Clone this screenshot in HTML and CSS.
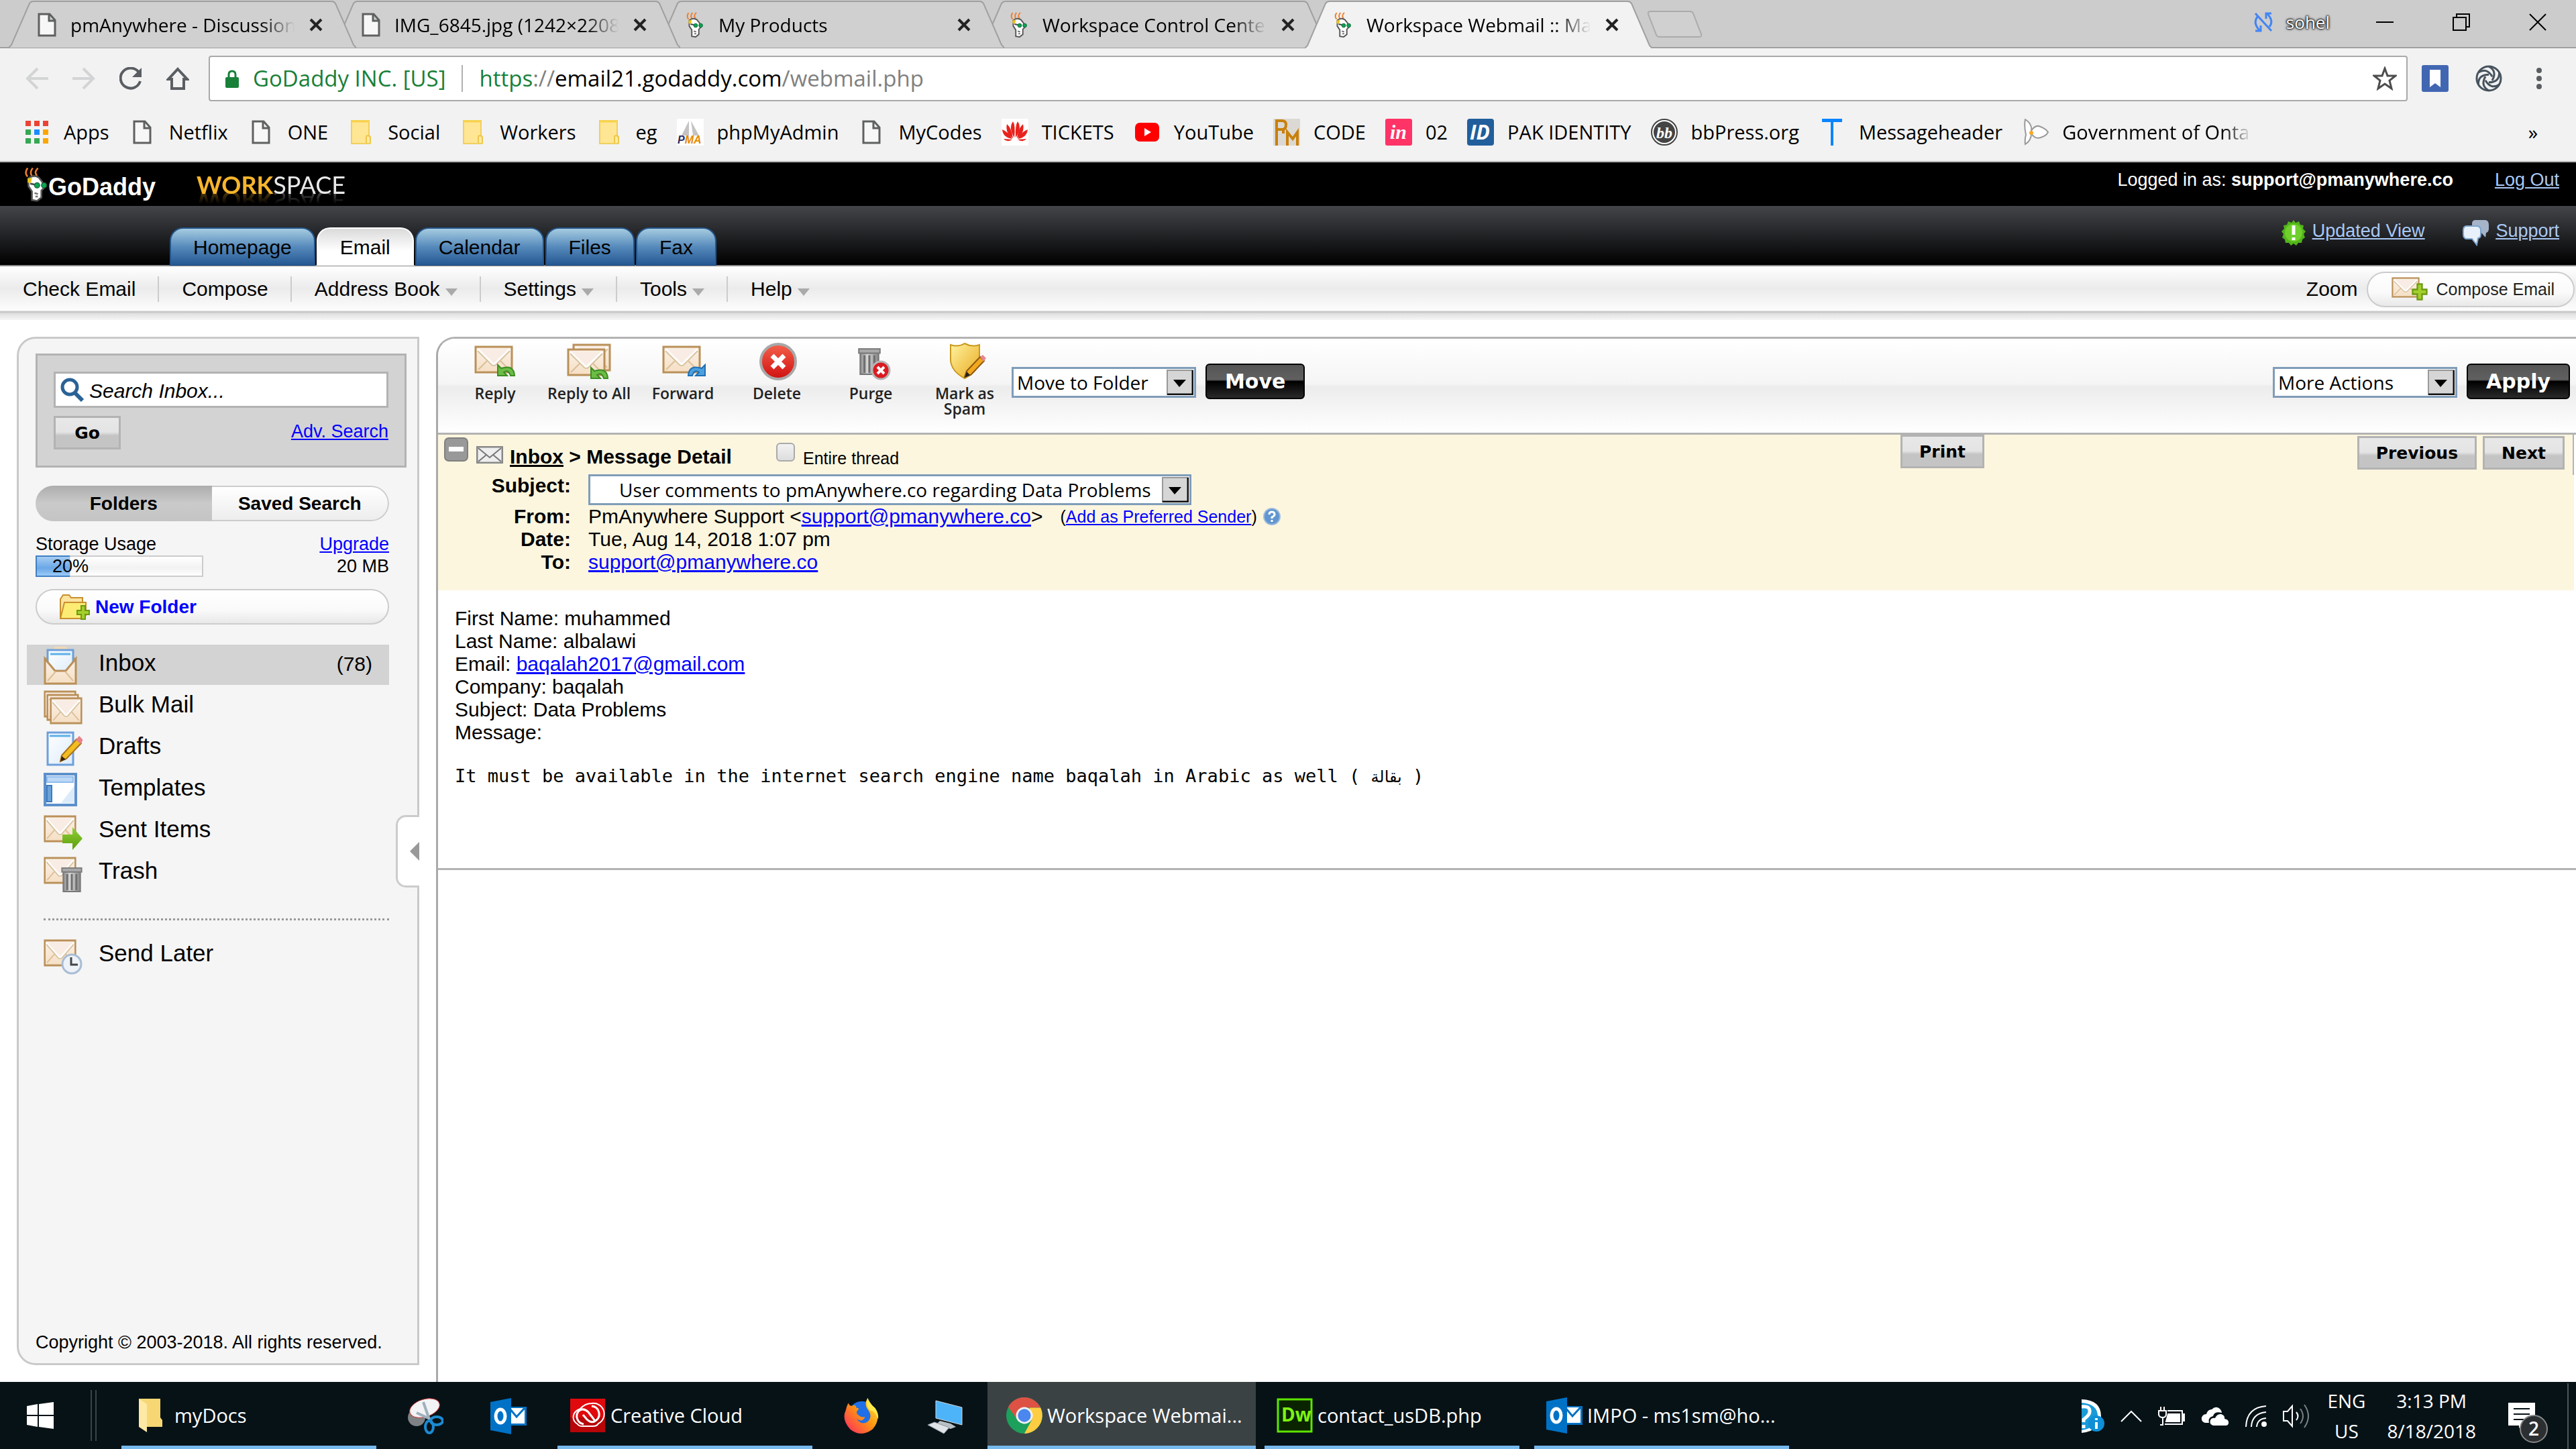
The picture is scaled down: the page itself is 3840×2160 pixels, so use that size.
FILE: index.html
```html
<!DOCTYPE html>
<html lang="en">

<head>
    <meta charset="UTF-8">
    <meta name="viewport" content="width=device-width, initial-scale=1.0">
    <title>Workspace Webmail :: Mail</title>
    <link rel="stylesheet" href="styles.css">
</head>

<body>
    <!-- shared icons -->
    <svg class="defs" width="0" height="0" aria-hidden="true">
        <defs>
            <linearGradient id="gEnv" x1="0" y1="0" x2="0" y2="1">
                <stop offset="0" stop-color="#fbf1e8"/>
                <stop offset="1" stop-color="#f5dfc4"/>
            </linearGradient>
            <linearGradient id="gSheet" x1="0" y1="0" x2="1" y2="1">
                <stop offset="0" stop-color="#ffffff"/>
                <stop offset="1" stop-color="#dcebfa"/>
            </linearGradient>
            <linearGradient id="gBin" x1="0" y1="0" x2="1" y2="0">
                <stop offset="0" stop-color="#8c8c8c"/>
                <stop offset="0.4" stop-color="#d8d8d8"/>
                <stop offset="1" stop-color="#858585"/>
            </linearGradient>
            <linearGradient id="gGold" x1="0" y1="0" x2="1" y2="1">
                <stop offset="0" stop-color="#fff3a0"/>
                <stop offset="1" stop-color="#e9a91f"/>
            </linearGradient>
            <linearGradient id="gRed" x1="0" y1="0" x2="0" y2="1">
                <stop offset="0" stop-color="#f4604a"/>
                <stop offset="1" stop-color="#d01010"/>
            </linearGradient>
            <linearGradient id="gFire" x1="1" y1="0" x2="0" y2="1">
                <stop offset="0" stop-color="#fff44f"/>
                <stop offset="0.45" stop-color="#ff980e"/>
                <stop offset="1" stop-color="#ff1f6b"/>
            </linearGradient>
            <linearGradient id="gArrow" x1="0" y1="0" x2="0" y2="1">
                <stop offset="0" stop-color="#8ed136"/>
                <stop offset="1" stop-color="#5d9c0c"/>
            </linearGradient>
        </defs>
        <symbol id="tab-shape" viewBox="0 0 518 71" preserveAspectRatio="none">
            <path d="M0 71 L4 67 L31 5 Q33 2 37 2 H481 Q485 2 487 5 L514 67 L518 71" stroke-width="2"/>
        </symbol>
        <symbol id="page" viewBox="0 0 28 36">
            <path d="M2 2 H18 L26 11 V34 H2 Z M17 2 V12 H26" fill="#f7f7f7" stroke="#5f6060" stroke-width="3"/>
        </symbol>
        <symbol id="folder" viewBox="0 0 30 36">
            <path d="M1 1 H27 V23 L29 25 V35 H1 Z" fill="#ffe694" stroke="#f0cf5e" stroke-width="2"/>
            <path d="M1 2 H27" stroke="#f9d34c" stroke-width="3"/>
            <path d="M23 34 V25 Q23 23 26 23 Q29 24 29 27 V34" fill="#ffeaa3" stroke="#eec74a" stroke-width="2"/>
        </symbol>
        <symbol id="daddy" viewBox="0 0 28 40">
            <path d="M4 11 Q0 7 4 1 M9 10 Q6 6 10 1 M15 10 Q11 6 16 1" fill="none" stroke="#ee7c2b" stroke-width="2"/>
            <path d="M5 13 Q11 8 17 12 L21 17 L23 24 L20 27 L20 35 L15 39 L9 38 L9 28 L5 22 Z" fill="#fff" stroke="#555" stroke-width="2"/>
            <path d="M4 13 L9 12 L8 18 L4 18 Z" fill="#e8c21d"/>
            <path d="M12 30 L16 31 M13 34 L16 34" stroke="#777" stroke-width="2"/>
            <path d="M7 19 L12 20" stroke="#444" stroke-width="2"/>
            <circle cx="15" cy="21" r="3" fill="#0aa653" stroke="#17613a"/>
            <circle cx="23" cy="21" r="3" fill="#0aa653" stroke="#17613a"/>
        </symbol>
        <symbol id="x" viewBox="0 0 20 20">
            <path d="M2 2 L18 18 M18 2 L2 18" stroke="#222" stroke-width="4"/>
        </symbol>
        <symbol id="env" viewBox="0 0 58 42" preserveAspectRatio="none">
            <rect x="2" y="2" width="54" height="38" fill="url(#gEnv)" stroke="#ba9059" stroke-width="3"/>
            <path d="M6 36 L22 20 M52 36 L36 20" stroke="#dcbf98" stroke-width="2"/>
            <path d="M5 6 L29 29 L53 6" fill="#f8ece4" stroke="#fff" stroke-width="4"/>
            <path d="M5 8 L26 29 Q29 31 32 29 L53 8" fill="none" stroke="#d9c4a0" stroke-width="2"/>
        </symbol>
        <symbol id="bin" viewBox="0 0 32 40">
            <path d="M3 8 H29 V38 H3 Z" fill="url(#gBin)" stroke="#777" stroke-width="2"/>
            <path d="M9 11 V36 M16 11 V36 M23 11 V36" stroke="#6f6f6f" stroke-width="3"/>
            <rect x="1" y="2" width="30" height="6" fill="#a9a9a9" stroke="#7d7d7d" stroke-width="2"/>
        </symbol>
        <symbol id="plus" viewBox="0 0 20 24">
            <path d="M7 2 H13 V9 H19 V15 H13 V22 H7 V15 H1 V9 H7 Z" fill="#a3cf2d" stroke="#6d9a12" stroke-width="2"/>
        </symbol>
        <symbol id="outlook" viewBox="0 0 54 54">
            <rect x="26" y="13" width="28" height="28" fill="#0072c6"/>
            <rect x="29" y="15" width="22" height="23" fill="#fff"/>
            <path d="M29 16 L39 28 L51 15" fill="none" stroke="#0072c6" stroke-width="3"/>
            <path d="M0 6 L31 0 V54 L0 48 Z" fill="#0072c6"/>
            <ellipse cx="15" cy="27" rx="7" ry="10" fill="none" stroke="#fff" stroke-width="5"/>
        </symbol>
        <symbol id="select-arrow" viewBox="0 0 40 38">
            <rect x="1" y="1" width="38" height="36" fill="#d6d6d6" stroke="#999" stroke-width="2"/>
            <path d="M1 37 H39 V1" fill="none" stroke="#111" stroke-width="3"/>
            <path d="M10 15 H29 L19 26 Z" fill="#000"/>
        </symbol>
        <path id="petal" d="M20 2 Q33 9 25 23"/>
    </svg>

    <header class="browser">
        <div class="tab-strip">
            <div class="tabs">
                <div class="tab">
                    <svg class="tab-bg"><use href="#tab-shape"/></svg>
                    <svg class="tab-icon"><use href="#page"/></svg>
                    <span class="tab-title">pmAnywhere - Discussion</span>
                    <button class="tab-close" aria-label="Close tab"><svg><use href="#x"/></svg></button>
                </div>
                <div class="tab">
                    <svg class="tab-bg"><use href="#tab-shape"/></svg>
                    <svg class="tab-icon"><use href="#page"/></svg>
                    <span class="tab-title">IMG_6845.jpg (1242×2208)</span>
                    <button class="tab-close" aria-label="Close tab"><svg><use href="#x"/></svg></button>
                </div>
                <div class="tab">
                    <svg class="tab-bg"><use href="#tab-shape"/></svg>
                    <svg class="tab-icon"><use href="#daddy"/></svg>
                    <span class="tab-title">My Products</span>
                    <button class="tab-close" aria-label="Close tab"><svg><use href="#x"/></svg></button>
                </div>
                <div class="tab">
                    <svg class="tab-bg"><use href="#tab-shape"/></svg>
                    <svg class="tab-icon"><use href="#daddy"/></svg>
                    <span class="tab-title">Workspace Control Center</span>
                    <button class="tab-close" aria-label="Close tab"><svg><use href="#x"/></svg></button>
                </div>
                <div class="tab active">
                    <svg class="tab-bg"><use href="#tab-shape"/></svg>
                    <svg class="tab-icon"><use href="#daddy"/></svg>
                    <span class="tab-title">Workspace Webmail :: Mail</span>
                    <button class="tab-close" aria-label="Close tab"><svg><use href="#x"/></svg></button>
                </div>
            </div>
            <button class="new-tab" aria-label="New tab">
                <svg width="84" height="42" viewBox="0 0 84 42"><path d="M6 2 H64 Q68 2 69 5 L81 36 Q82 40 78 40 H20 Q15 40 14 37 L2 6 Q1 2 6 2 Z" fill="#d0d0d0" stroke="#ababab" stroke-width="2"/></svg>
            </button>
            <div class="window-controls">
                <div class="profile">
                    <svg width="28" height="30" viewBox="0 0 28 30" fill="none" stroke="#4285f4" stroke-width="3"><path d="M2 2 L26 28 M8 27 Q-2 16 5 7 M20 3 Q30 13 23 22"/><path d="M2 28 H10 V20 M26 2 H18 V10"/></svg>
                    <span>sohel</span>
                </div>
                <button aria-label="Minimize"><svg width="26" height="26" viewBox="0 0 26 26"><path d="M0 13 H26" stroke="#000" stroke-width="2"/></svg></button>
                <button aria-label="Restore"><svg width="26" height="26" viewBox="0 0 26 26" fill="none" stroke="#000" stroke-width="2"><path d="M1 6 H20 V25 H1 Z M6 6 V1 H25 V20 H20"/></svg></button>
                <button aria-label="Close"><svg width="26" height="26" viewBox="0 0 26 26"><path d="M1 1 L25 25 M25 1 L1 25" stroke="#000" stroke-width="2"/></svg></button>
            </div>
        </div>

        <div class="address-bar">
            <button class="nav-btn" aria-label="Back"><svg viewBox="0 0 34 34" fill="none" stroke="#d3d4d5" stroke-width="4"><path d="M34 17 H3 M18 2 L3 17 L18 32"/></svg></button>
            <button class="nav-btn" aria-label="Forward"><svg viewBox="0 0 34 34" fill="none" stroke="#d3d4d5" stroke-width="4"><path d="M0 17 H31 M16 2 L31 17 L16 32"/></svg></button>
            <button class="nav-btn" aria-label="Reload"><svg viewBox="0 0 34 34"><path d="M29 8 A15 15 0 1 0 31 21" fill="none" stroke="#5a5d61" stroke-width="4"/><path d="M33 1 V15 H19 Z" fill="#5a5d61"/></svg></button>
            <button class="nav-btn" aria-label="Home"><svg viewBox="0 0 34 34"><path d="M17 3 L31 18 H26 V32 H8 V18 H3 Z" fill="none" stroke="#5a5d61" stroke-width="4"/></svg></button>
            <div class="omnibox">
                <svg class="lock" width="22" height="27" viewBox="0 0 22 27"><path d="M6 12 V7 Q6 2 11 2 Q16 2 16 7 V12" fill="none" stroke="#188038" stroke-width="3"/><rect x="1" y="11" width="20" height="16" rx="2" fill="#188038"/></svg>
                <span class="cert">GoDaddy INC. [US]</span>
                <div class="url" role="textbox" contenteditable="true" aria-label="Address" spellcheck="false"><span class="scheme">https</span>://<span class="host">email21.godaddy.com</span>/webmail.php</div>
                <button class="star" aria-label="Bookmark this page"><svg width="36" height="36" viewBox="0 0 36 36"><path d="M18 3 L22 14 L34 14 L25 21 L28 33 L18 26 L8 33 L11 21 L2 14 L14 14 Z" fill="none" stroke="#4d4d4d" stroke-width="3"/></svg></button>
            </div>
            <button class="ext" aria-label="Bookmark manager"><svg width="40" height="40" viewBox="0 0 40 40"><rect width="40" height="40" rx="3" fill="#4267b2"/><path d="M12 7 H28 V33 L20 27 L12 33 Z" fill="#fff"/></svg></button>
            <button class="ext" aria-label="Extension"><svg width="40" height="40" viewBox="0 0 40 40" fill="none" stroke="#46535e" stroke-width="3"><circle cx="20" cy="20" r="18"/><use href="#petal"/><use href="#petal" transform="rotate(60 20 20)"/><use href="#petal" transform="rotate(120 20 20)"/><use href="#petal" transform="rotate(180 20 20)"/><use href="#petal" transform="rotate(240 20 20)"/><use href="#petal" transform="rotate(300 20 20)"/></svg></button>
            <button class="ext menu" aria-label="Menu"><svg width="10" height="34" viewBox="0 0 10 34" fill="#5a5d61"><circle cx="5" cy="5" r="4"/><circle cx="5" cy="17" r="4"/><circle cx="5" cy="29" r="4"/></svg></button>
        </div>

        <nav class="bookmarks" aria-label="Bookmarks">
            <a href="#"><svg viewBox="0 0 40 40"><g fill="#ea4335"><rect x="3" y="3" width="8" height="8"/><rect x="16" y="3" width="8" height="8"/><rect x="29" y="3" width="8" height="8"/></g><g fill="#34a853"><rect x="3" y="16" width="8" height="8"/><rect x="3" y="29" width="8" height="8"/><rect x="16" y="29" width="8" height="8"/></g><rect x="16" y="16" width="8" height="8" fill="#1a8cff"/><g fill="#fba600"><rect x="29" y="16" width="8" height="8"/><rect x="29" y="29" width="8" height="8"/></g></svg>Apps</a>
            <a href="#"><svg class="small"><use href="#page"/></svg>Netflix</a>
            <a href="#"><svg class="small"><use href="#page"/></svg>ONE</a>
            <a href="#"><svg class="small"><use href="#folder"/></svg>Social</a>
            <a href="#"><svg class="small"><use href="#folder"/></svg>Workers</a>
            <a href="#"><svg class="small"><use href="#folder"/></svg>eg</a>
            <a href="#"><svg viewBox="0 0 40 40"><rect width="40" height="40" fill="#fff"/><path d="M18 3 L7 25 H18 Z M21 3 L24 25 H33 Z" fill="#c4c4c4"/><text x="1" y="37" class="pma" fill="#2c2c5e">P<tspan fill="#e58a00">MA</tspan></text></svg>phpMyAdmin</a>
            <a href="#"><svg class="small"><use href="#page"/></svg>MyCodes</a>
            <a href="#"><svg viewBox="0 0 40 40"><rect width="40" height="40" fill="#fff"/><g fill="#e8221c"><path d="M19 28 Q10 14 17 4 Q21 10 19 28 Z M21 28 Q20 10 24 4 Q31 14 21 28 Z"/><path d="M17 29 Q5 22 8 8 Q15 14 17 29 Z M23 29 Q35 22 32 8 Q25 14 23 29 Z"/><path d="M16 30 Q2 28 1 16 Q11 20 16 30 Z M24 30 Q38 28 39 16 Q29 20 24 30 Z"/><path d="M16 31 Q8 36 3 30 Z M24 31 Q32 36 37 30 Z"/></g></svg>TICKETS</a>
            <a href="#"><svg viewBox="0 0 40 40"><rect x="2" y="6" width="36" height="28" rx="7" fill="#f00"/><path d="M16 14 L26 20 L16 26 Z" fill="#fff"/></svg>YouTube</a>
            <a href="#"><svg viewBox="0 0 40 40"><rect width="40" height="40" fill="#dcd9d4"/><path d="M5 40 V3 H13 Q19 3 19 9 Q19 16 13 16 H5 M15 16 V22 M21 40 V20 L29 30 L36 20 V40" fill="none" stroke="#c8800c" stroke-width="4"/></svg>CODE</a>
            <a href="#"><svg viewBox="0 0 40 40"><rect width="40" height="40" rx="3" fill="#ff3366"/><text x="7" y="30" class="in" fill="#fff">in</text></svg>02</a>
            <a href="#"><svg viewBox="0 0 40 40"><rect width="40" height="40" rx="4" fill="#215f9c"/><text x="4" y="31" class="id" fill="#fff">ID</text></svg>PAK IDENTITY</a>
            <a href="#"><svg viewBox="0 0 40 40"><circle cx="20" cy="20" r="19" fill="#fff" stroke="#444" stroke-width="2"/><circle cx="20" cy="20" r="16" fill="#444"/><text x="8" y="29" class="bb" fill="#fff">bb</text></svg>bbPress.org</a>
            <a href="#"><svg viewBox="0 0 40 40"><path d="M5 0 H35 V5 H22 V40 H18 V5 H5 Z" fill="#0a84ff"/></svg>Messageheader</a>
            <a href="#" class="faded"><svg viewBox="0 0 40 40" fill="#fff" stroke="#999" stroke-width="2"><path d="M5 1 Q16 8 14 19 Q15 32 5 38 Q4 30 6 24 Q3 10 5 1 Z"/><path d="M14 18 Q20 8 28 12 Q36 15 39 20 Q36 26 28 28 Q20 31 14 22 Z"/><circle cx="14" cy="21" r="3" fill="#f7a928" stroke="none"/></svg>Government of Ontario</a>
            <button class="overflow" aria-label="More bookmarks">»</button>
        </nav>
    </header>

    <div class="page">
        <header class="top">
            <div class="brand-row">
                <a href="#" class="logo">
                    <svg width="36" height="52" viewBox="0 0 28 40"><use href="#daddy"/></svg><span>GoDaddy</span>
                </a>
                <span class="workspace"><b>WORK</b>SPACE</span>
                <div class="account">
                    <span>Logged in as: <b>support@pmanywhere.co</b></span>
                    <a href="#">Log Out</a>
                </div>
            </div>
            <div class="nav-row">
                <nav class="apps">
                    <a href="#">Homepage</a>
                    <a href="#" class="current">Email</a>
                    <a href="#">Calendar</a>
                    <a href="#">Files</a>
                    <a href="#">Fax</a>
                </nav>
                <div class="help-links">
                    <a href="#"><svg width="38" height="40" viewBox="0 0 38 40"><path d="M19 1 L22 5 L27 3 L29 8 L34 9 L33 14 L37 18 L34 22 L36 27 L32 30 L31 35 L26 35 L23 39 L19 36 L15 39 L12 35 L7 35 L6 30 L2 27 L4 22 L1 18 L5 14 L4 9 L9 8 L11 3 L16 5 Z" fill="#52b51b"/><circle cx="19" cy="20" r="13" fill="#6fcf2c"/><path d="M19 9 V23 M19 27 V31" stroke="#fff" stroke-width="5"/></svg><span>Updated View</span></a>
                    <a href="#"><svg width="40" height="40" viewBox="0 0 40 40"><path d="M18 1 H34 Q39 2 39 8 V14 Q39 19 35 20 L34 27 L28 20 H18 Q14 19 14 14 V6 Q14 2 18 1 Z" fill="#a6b4c9"/><path d="M5 10 H22 Q27 11 27 16 V22 Q27 28 23 28 L21 38 L14 29 H5 Q1 28 1 22 V16 Q1 11 5 10 Z" fill="#e8f1fb" stroke="#7ea5cf" stroke-width="2"/></svg><span>Support</span></a>
                </div>
            </div>
            <div class="menu-row">
                <nav class="menu-items">
                    <a href="#">Check Email</a>
                    <a href="#">Compose</a>
                    <a href="#" class="drop">Address Book</a>
                    <a href="#" class="drop">Settings</a>
                    <a href="#" class="drop">Tools</a>
                    <a href="#" class="drop">Help</a>
                </nav>
                <a href="#" class="zoom">Zoom</a>
                <button class="pill compose"><svg width="54" height="36" viewBox="0 0 54 36"><use href="#env" width="42" height="31"/><use href="#plus" x="30" y="8" width="24" height="28"/></svg>Compose Email</button>
            </div>
        </header>

        <div class="workspace-area">
            <aside class="sidebar">
                <form class="search">
                    <div class="search-field">
                        <svg width="36" height="36" viewBox="0 0 36 36" fill="none" stroke="#2a6296"><circle cx="14" cy="14" r="11" stroke-width="5"/><path d="M22 23 L33 34" stroke-width="6"/></svg>
                        <input type="text" placeholder="Search Inbox..." aria-label="Search Inbox">
                    </div>
                    <div class="search-actions">
                        <button type="button" class="grey-btn">Go</button>
                        <a href="#">Adv. Search</a>
                    </div>
                </form>
                <div class="switch">
                    <button class="on">Folders</button>
                    <button>Saved Search</button>
                </div>
                <div class="storage">
                    <span>Storage Usage</span>
                    <a href="#">Upgrade</a>
                    <div class="meter"><div class="meter-fill" style="width: 20%"></div><span>20%</span></div>
                    <span class="quota">20 MB</span>
                </div>
                <button class="pill new-folder"><svg width="46" height="40" viewBox="0 0 46 40"><path d="M2 36 V8 L6 2 H15 L18 6 H35 V14" fill="#fbe3a0" stroke="#c98f2b" stroke-width="2"/><path d="M8 13 H40 V32 L37 37 H2 Z" fill="#fcec74" stroke="#c98f2b" stroke-width="2"/><use href="#plus" x="26" y="16" width="20" height="24"/></svg>New Folder</button>

                <nav class="folders">
                    <a href="#" class="selected">
                        <svg viewBox="0 0 58 58"><path d="M12 8 L17 1 H33 L38 8" fill="#efd9b5"/><path d="M2 20 L6 17 H44 L48 20 V56 H2 Z" fill="#e5c496" stroke="#ba9059" stroke-width="2"/><rect x="6" y="6" width="38" height="36" fill="url(#gSheet)" stroke="#6d9fdb" stroke-width="3"/><path d="M10 12 H40" stroke="#5db1e8" stroke-width="3"/><path d="M2 19 L17 37 H33 L48 19 V56 H2 Z" fill="url(#gEnv)" stroke="#ba9059" stroke-width="3"/><path d="M6 52 L18 38 M44 52 L32 38" stroke="#dcbf98" stroke-width="2"/></svg>
                        <span>Inbox</span><em>(78)</em>
                    </a>
                    <a href="#">
                        <svg viewBox="0 0 58 58"><use href="#env" y="4" width="49" height="41"/><use href="#env" x="4" y="9" width="49" height="41"/><use href="#env" x="9" y="14" width="49" height="41"/></svg>
                        <span>Bulk Mail</span>
                    </a>
                    <a href="#">
                        <svg viewBox="0 0 58 58"><rect x="6" y="5" width="38" height="48" fill="url(#gSheet)" stroke="#6d9fdb" stroke-width="3"/><path d="M9 10 H40" stroke="#5db1e8" stroke-width="3"/><path d="M25 48 L27 39 L49 15 L56 21 L34 44 Z" fill="#f3bd22" stroke="#a8741a" stroke-width="2"/><path d="M25 48 L27 40 L33 45 Z" fill="#3b2412"/><path d="M48 16 L53 10 L59 16 L55 22 Z" fill="#e8828c"/></svg>
                        <span>Drafts</span>
                    </a>
                    <a href="#">
                        <svg viewBox="0 0 58 58"><rect x="2" y="5" width="46" height="46" fill="#fff" stroke="#5d90cb" stroke-width="4"/><path d="M26 48 L46 22 V48 Z" fill="#dcebfa"/><rect x="5" y="9" width="39" height="8" fill="#bcd8f5" stroke="#8fbcee" stroke-width="2"/><rect x="5" y="22" width="7" height="24" fill="#6ba3da" stroke="#3e7cc0" stroke-width="2"/></svg>
                        <span>Templates</span>
                    </a>
                    <a href="#">
                        <svg viewBox="0 0 58 58"><use href="#env" y="4" width="49" height="41"/><path d="M28 33 H43 V22 L58 39 L43 56 V46 H28 Z" fill="url(#gArrow)"/></svg>
                        <span>Sent Items</span>
                    </a>
                    <a href="#">
                        <svg viewBox="0 0 58 58"><use href="#env" y="4" width="49" height="41"/><use href="#bin" x="26" y="19" width="32" height="39"/></svg>
                        <span>Trash</span>
                    </a>
                </nav>
                <nav class="folders later">
                    <a href="#">
                        <svg viewBox="0 0 58 58"><use href="#env" y="4" width="49" height="41"/><circle cx="42" cy="41" r="14" fill="#edf2f8" stroke="#a9bdd4" stroke-width="3"/><path d="M41 31 V42 H51" fill="none" stroke="#444" stroke-width="3"/></svg>
                        <span>Send Later</span>
                    </a>
                </nav>
                <footer>Copyright © 2003-2018. All rights reserved.</footer>
                <button class="collapse" aria-label="Collapse sidebar"><svg width="14" height="28" viewBox="0 0 14 28"><path d="M14 0 V28 L0 14 Z" fill="#999"/></svg></button>
            </aside>

            <main class="mail">
                <div class="toolbar">
                    <button class="tool"><svg viewBox="0 0 68 58"><use href="#env" x="3" y="5" width="58" height="42"/><path d="M38 34 V50 H52 L47 45 Q54 40 57 50 L63 50 Q62 33 43 39 Z" fill="#6bbd45" stroke="#3d8c22" stroke-width="2"/></svg>Reply</button>
                    <button class="tool"><svg viewBox="0 0 68 58"><use href="#env" x="9" y="2" width="58" height="42"/><use href="#env" x="1" y="9" width="58" height="42"/><path d="M37 38 V54 H51 L46 49 Q53 44 56 54 L62 54 Q61 37 42 43 Z" fill="#6bbd45" stroke="#3d8c22" stroke-width="2"/></svg>Reply to All</button>
                    <button class="tool"><svg viewBox="0 0 68 58"><use href="#env" x="3" y="5" width="58" height="42"/><path d="M67 34 V50 H53 L58 45 Q51 40 48 50 L42 50 Q43 33 62 39 Z" fill="#4ba0de" stroke="#1f6fb5" stroke-width="2"/></svg>Forward</button>
                    <button class="tool"><svg viewBox="0 0 68 58"><circle cx="36" cy="29" r="26" fill="url(#gRed)" stroke="#a8a8a8" stroke-width="4"/><path d="M27 20 L45 38 M45 20 L27 38" stroke="#fff" stroke-width="7"/></svg>Delete</button>
                    <button class="tool"><svg viewBox="0 0 68 58"><use href="#bin" x="11" y="8" width="42" height="42"/><circle cx="49" cy="42" r="13" fill="#da1b22" stroke="#b5b5b5" stroke-width="3"/><path d="M44 37 L54 47 M54 37 L44 47" stroke="#fff" stroke-width="4"/></svg>Purge</button>
                    <button class="tool"><svg viewBox="0 0 68 58"><path d="M13 4 Q24 8 34 2 Q45 8 56 4 V28 Q54 44 34 54 Q15 44 13 28 Z" fill="url(#gGold)" stroke="#c99a1c" stroke-width="2"/><path d="M34 52 L37 43 L57 22 L63 28 L43 49 Z" fill="#f3a81c" stroke="#8d5a10" stroke-width="2"/><path d="M34 53 L37 44 L42 49 Z" fill="#222"/><path d="M57 22 L61 19 L66 24 L62 29 Z" fill="#e88790"/></svg>Mark as Spam</button>
                    <div class="select folder-select">
                        <select aria-label="Move to Folder"><option>Move to Folder</option></select>
                        <svg><use href="#select-arrow"/></svg>
                    </div>
                    <button class="dark-btn">Move</button>
                    <div class="select actions-select">
                        <select aria-label="More Actions"><option>More Actions</option></select>
                        <svg><use href="#select-arrow"/></svg>
                    </div>
                    <button class="dark-btn">Apply</button>
                </div>

                <section class="mail-head">
                    <div class="mail-info">
                        <div class="crumbs">
                            <button class="fold" aria-label="Collapse header"><svg width="36" height="36" viewBox="0 0 36 36"><rect x="1" y="1" width="34" height="34" rx="6" fill="#999" stroke="#808080" stroke-width="2"/><rect x="7" y="14" width="22" height="7" fill="#fff"/></svg></button>
                            <svg width="40" height="26" viewBox="0 0 40 26"><rect x="1" y="1" width="38" height="24" fill="#eee" stroke="#888" stroke-width="3"/><path d="M3 3 L20 17 L37 3 M3 23 L15 13 M37 23 L25 13" fill="none" stroke="#777" stroke-width="2"/></svg>
                            <h1><a href="#">Inbox</a> &gt; Message Detail</h1>
                            <input type="checkbox" id="thread">
                            <label for="thread">Entire thread</label>
                        </div>
                        <dl class="fields">
                            <dt><label for="subject">Subject:</label></dt>
                            <dd>
                                <div class="select subject-select">
                                    <select id="subject"><option>User comments to pmAnywhere.co regarding Data Problems</option></select>
                                    <svg><use href="#select-arrow"/></svg>
                                </div>
                            </dd>
                            <dt>From:</dt>
                            <dd class="from">
                                <span>PmAnywhere Support &lt;<a href="#">support@pmanywhere.co</a>&gt;</span>
                                <small>(<a href="#">Add as Preferred Sender</a>)</small>
                                <svg width="26" height="26" viewBox="0 0 26 26"><circle cx="13" cy="13" r="12" fill="#6196d0" stroke="#9dbbdc" stroke-width="2"/><path d="M9 10 Q9 6 13 6 Q17 6 17 10 Q17 12 13 14 V16 M13 18 V21" fill="none" stroke="#fff" stroke-width="3"/></svg>
                            </dd>
                            <dt>Date:</dt>
                            <dd>Tue, Aug 14, 2018 1:07 pm</dd>
                            <dt>To:</dt>
                            <dd><a href="#">support@pmanywhere.co</a></dd>
                        </dl>
                    </div>
                    <button class="grey-btn">Print</button>
                    <div class="pager">
                        <button class="grey-btn">Previous</button>
                        <button class="grey-btn">Next</button>
                    </div>
                </section>

                <article class="message">
                    <p>First Name: muhammed<br>
                        Last Name: albalawi<br>
                        Email: <a href="#">baqalah2017@gmail.com</a><br>
                        Company: baqalah<br>
                        Subject: Data Problems<br>
                        Message:</p>
                    <pre>It must be available in the internet search engine name baqalah in Arabic as well ( <span lang="ar">بقالة</span> )</pre>
                </article>
            </main>
        </div>
    </div>

    <footer class="taskbar">
        <button class="start" aria-label="Start"><svg width="40" height="40" viewBox="0 0 40 40" fill="#fff"><path d="M0 6 L16 3 V19 H0 Z M18 3 L40 0 V19 H18 Z M0 21 H16 V37 L0 34 Z M18 21 H40 V40 L18 37 Z"/></svg></button>
        <span class="grip"></span>
        <button class="task wide"><svg viewBox="0 0 54 54"><path d="M8 2 H40 V30 L43 34 V44 H8 Z" fill="#f6d774"/><path d="M8 2 L20 10 V52 L8 44 Z" fill="#ffe9a5"/></svg>myDocs</button>
        <button class="task" aria-label="Snipping Tool"><svg viewBox="0 0 54 54"><circle cx="14" cy="29" r="13" fill="#7e8284"/><ellipse cx="26" cy="15" rx="23" ry="13" transform="rotate(-18 26 15)" fill="#f1f3f4" stroke="#c33" stroke-width="1"/><path d="M24 6 L33 32 M14 22 L36 32" stroke="#9fb0bd" stroke-width="4"/><ellipse cx="33" cy="43" rx="6" ry="9" fill="none" stroke="#1c8ad1" stroke-width="4"/><ellipse cx="44" cy="34" rx="9" ry="6" fill="none" stroke="#1c8ad1" stroke-width="4"/></svg></button>
        <button class="task" aria-label="Outlook"><svg><use href="#outlook"/></svg></button>
        <button class="task wide"><svg viewBox="0 0 54 54"><rect x="1" y="2" width="52" height="50" fill="#e0090d"/><path d="M1 30 H53 V52 H1 Z" fill="#b80507"/><g fill="none" stroke="#fff" stroke-width="3"><path d="M21 40 A12 12 0 0 1 14 20 Q21 15 28 22 L38 35"/><path d="M33 13 A12 12 0 0 1 40 34 Q33 40 26 33 L20 26"/><path d="M12 40 A19 14 0 0 1 16 17 Q23 9 33 9 A16 16 0 0 1 43 39 Q41 43 35 43 H19 Q14 43 12 40 Z" stroke-width="2"/></g></svg>Creative Cloud</button>
        <button class="task" aria-label="Firefox"><svg viewBox="0 0 56 58"><circle cx="29" cy="27" r="22" fill="#1e6fe8"/><path d="M7 8 Q10 14 14 12 Q20 10 20 16 Q26 15 22 20 Q18 24 24 28 Q28 32 34 30 Q30 40 20 33 Q30 46 40 36 Q46 28 38 18 Q32 10 38 0 Q42 10 50 16 Q60 34 46 50 Q28 64 10 50 Q-4 34 3 20 Q4 14 7 8 Z" fill="url(#gFire)"/><path d="M38 0 Q42 10 50 16 Q56 24 55 34 Q50 20 42 20 Q34 12 38 0 Z" fill="#ffe94a"/></svg></button>
        <button class="task" aria-label="Computer"><svg viewBox="0 0 54 54"><path d="M14 4 L53 14 V40 L14 30 Z" fill="#4db4fa" stroke="#cfd6da" stroke-width="1"/><path d="M20 34 L36 38 L44 43 L36 46 L14 40 Z" fill="#b8c0c5"/><path d="M2 40 L12 36 L34 44 L26 53 Z" fill="#dfe4e8" stroke="#8d979e"/></svg></button>
        <button class="task wide active"><svg viewBox="0 0 56 56"><circle cx="28" cy="28" r="28" fill="#1da05b"/><path d="M3 15 A28 28 0 0 1 53 16 H28 V28 L16 33 Z" fill="#de5145"/><path d="M53 16 A28 28 0 0 1 28 56 L40 34 L36 16 Z" fill="#ffcd42"/><circle cx="28" cy="28" r="13" fill="#f1f1f1"/><circle cx="28" cy="28" r="10" fill="#4a87ee"/></svg>Workspace Webmai...</button>
        <button class="task wide"><svg viewBox="0 0 54 54"><rect x="2" y="3" width="50" height="48" fill="#0b2400" stroke="#5de500" stroke-width="3"/><text x="7" y="36" class="dw" fill="#7cf411">Dw</text></svg>contact_usDB.php</button>
        <button class="task wide"><svg><use href="#outlook"/></svg>IMPO - ms1sm@ho...</button>
        <div class="tray">
            <svg width="34" height="52" viewBox="0 0 34 52"><path d="M0 1 Q29 2 29 26 Q28 48 0 51 Z" fill="#fff"/><path d="M0 6 Q24 8 24 26 Q22 44 0 47 Z" fill="#1b9ad8"/><path d="M0 12 Q13 10 12 20 Q12 24 3 31 V35 M3 39 V44" fill="none" stroke="#fff" stroke-width="5"/><circle cx="22" cy="37" r="12" fill="#0e8fd6"/><path d="M22 29 V32 M22 35 V45" stroke="#fff" stroke-width="4"/></svg>
            <svg width="32" height="18" viewBox="0 0 32 18"><path d="M1 17 L16 2 L31 17" fill="none" stroke="#fff" stroke-width="2"/></svg>
            <svg width="40" height="28" viewBox="0 0 40 28" fill="none" stroke="#fff" stroke-width="2"><path d="M4 0 V6 M9 0 V6 M1 6 H12 V12 Q11 16 7 16 Q2 16 1 12 Z M7 16 V27 H3 M14 6 H36 V26 H10"/><path d="M15 11 H32 V22 H12 Z" fill="#fff"/><path d="M37 11 V21 H39 V11 Z"/></svg>
            <svg width="42" height="28" viewBox="0 0 42 28" fill="#fff"><path d="M12 24 H6 Q0 22 1 16 Q3 11 8 11 Q10 4 16 4 Q22 -2 28 3 Q31 6 31 9 Q20 6 18 14 Q10 16 12 24 Z"/><path d="M18 28 Q12 26 14 20 Q16 16 21 17 Q24 10 30 11 Q36 13 35 18 Q42 19 41 25 Q40 28 37 28 Z"/></svg>
            <svg width="32" height="32" viewBox="0 0 32 32" fill="none" stroke="#fff" stroke-width="2"><path d="M1 32 Q2 3 31 1 M9 32 Q10 12 31 10 M17 32 Q18 20 31 19"/><circle cx="28" cy="28" r="3" fill="#fff"/></svg>
            <svg width="42" height="38" viewBox="0 0 42 38" fill="none" stroke="#fff" stroke-width="2"><path d="M1 12 H7 L14 4 V34 L7 26 H1 Z M20 13 Q25 19 20 25"/><path d="M26 8 Q34 19 26 30 M32 2 Q44 19 32 36" stroke="#7b8285"/></svg>
            <div class="lang"><span>ENG</span><span>US</span></div>
            <div class="clock"><span>3:13 PM</span><span>8/18/2018</span></div>
            <button class="notify" aria-label="Notifications"><svg width="60" height="60" viewBox="0 0 60 60"><path d="M0 0 H40 V34 H20 L16 38 V34 H0 Z" fill="#fff"/><path d="M8 9 H32 M8 17 H32 M8 25 H24" stroke="#071217" stroke-width="2"/></svg><span>2</span></button>
            <span class="show-desktop"></span>
        </div>
    </footer>
</body>

</html>
```
FILE: styles.css
```css
:root {
    --ui: "Open Sans", "Noto Sans", sans-serif;
    --web: "Liberation Sans", Arial, sans-serif;
    --heavy: "DejaVu Sans", Verdana, sans-serif;
    --link: #0000ff;
    --rule: #b3b3b3;
}

* {
    box-sizing: border-box;
    margin: 0;
    padding: 0;
}

body {
    display: flex;
    flex-direction: column;
    height: 100vh;
    overflow: hidden;
    background: #fff;
    color: #000;
    font-family: var(--web);
    font-size: 30px;
    line-height: 34px;
}

button {
    border: none;
    background: none;
    font: inherit;
    color: inherit;
    cursor: pointer;
}

svg {
    display: block;
    flex: none;
}

a {
    color: var(--link);
}

.defs {
    position: absolute;
}

/* ---- browser frame ---- */

.browser {
    background: #f2f2f2;
    border-bottom: 2px solid #b8b8b8;
    font-family: var(--ui);
    font-size: 29px;
}

.tab-strip {
    display: flex;
    height: 72px;
    padding-left: 13px;
    background: #ccc;
    box-shadow: inset 0 -2px #a0a0a0;
}

.tabs {
    display: flex;
}

.tab {
    position: relative;
    display: flex;
    align-items: center;
    width: 518px;
    height: 72px;
    margin-right: -35px;
    padding: 2px 50px 0 43px;
    font-size: 28px;
}

.tab:nth-child(1) { z-index: 4; }
.tab:nth-child(2) { z-index: 3; }
.tab:nth-child(3) { z-index: 2; }
.tab:nth-child(4) { z-index: 1; }

.tab.active {
    z-index: 5;
}

.tab-bg {
    position: absolute;
    inset: 0;
    z-index: -1;
    width: 100%;
    height: 71px;
    fill: #d0d0d0;
    stroke: #a0a0a0;
}

.tab.active .tab-bg {
    height: 72px;
    fill: #f2f2f2;
}

.tab-icon {
    width: 28px;
    height: 38px;
    margin-right: 21px;
}

.tab-title {
    flex: 1;
    overflow: hidden;
    white-space: nowrap;
    line-height: 40px;
    mask-image: linear-gradient(to right, #000 85%, transparent);
}

.tab-close {
    margin-left: 22px;
}

.tab-close svg {
    width: 20px;
    height: 20px;
}

.new-tab {
    margin: 0 0 0 27px;
}

.window-controls {
    display: flex;
    align-items: center;
    margin-left: auto;
    height: 66px;
}

.window-controls button {
    display: flex;
    justify-content: center;
    width: 114px;
}

.profile {
    display: flex;
    align-items: center;
    gap: 20px;
    margin-right: 25px;
    color: #fff;
    font-size: 26px;
    text-shadow: 0 0 2px #000, 0 0 3px #000, 0 0 4px #000;
}

.address-bar {
    display: flex;
    align-items: center;
    height: 90px;
    padding: 0 50px 0 38px;
}

.nav-btn {
    margin-right: 36px;
}

.nav-btn svg {
    width: 34px;
    height: 34px;
}

.nav-btn:nth-child(4) {
    margin-right: 29px;
}

.omnibox {
    display: flex;
    flex: 1;
    align-items: center;
    height: 68px;
    padding: 0 14px 0 22px;
    border: 2px solid #a9a9a9;
    border-radius: 4px;
    background: #fff;
    font-size: 33px;
    line-height: 40px;
}

.cert {
    margin-left: 20px;
    padding-right: 24px;
    border-right: 2px solid #b0b0b0;
    color: #188038;
}

.url {
    flex: 1;
    margin-left: 24px;
    color: #808080;
    outline: none;
}

.scheme {
    color: #188038;
}

.host {
    color: #000;
}

.ext {
    margin-left: 21px;
}

.ext + .ext {
    margin-left: 40px;
}

.ext.menu {
    margin-left: 50px;
}

.bookmarks {
    display: flex;
    align-items: center;
    height: 78px;
    padding: 0 57px 9px 35px;
}

.bookmarks a {
    display: flex;
    align-items: center;
    gap: 20px;
    margin-right: 29px;
    color: #000;
    text-decoration: none;
    white-space: nowrap;
    line-height: 40px;
}

.bookmarks svg {
    width: 40px;
    height: 40px;
}

.bookmarks svg.small {
    height: 36px;
}

.bookmarks .faded {
    width: 342px;
    overflow: hidden;
    mask-image: linear-gradient(to right, #000 88%, transparent);
}

.overflow {
    margin-left: auto;
}

.pma {
    font: italic bold 16px var(--web);
}

.in {
    font: italic bold 30px "Liberation Serif", serif;
}

.id {
    font: italic bold 30px var(--ui);
}

.bb {
    font: italic bold 24px "Liberation Serif", serif;
}

/* ---- webmail header ---- */

.page {
    display: flex;
    flex: 1;
    flex-direction: column;
    min-height: 0;
}

.brand-row {
    display: flex;
    align-items: center;
    height: 65px;
    padding: 0 25px 0 36px;
    background: #000;
    color: #fff;
}

.logo {
    display: flex;
    align-items: center;
    color: #fff;
    font-size: 36px;
    font-weight: bold;
    text-decoration: none;
}

.logo span {
    padding-top: 8px;
}

.workspace {
    margin-left: 61px;
    color: #e8e8e8;
    font-family: Lato, sans-serif;
    font-size: 36px;
    font-weight: 400;
    -webkit-box-reflect: below -10px linear-gradient(transparent 35%, rgba(0, 0, 0, 0.4));
}

.workspace b {
    color: #f6b52c;
    font-weight: 700;
}

.account {
    display: flex;
    gap: 62px;
    margin-left: auto;
    padding-bottom: 13px;
    font-size: 27px;
}

.account a,
.help-links a {
    color: #a9c9f5;
}

.nav-row {
    display: flex;
    height: 90px;
    padding: 0 25px 0 253px;
    border-bottom: 2px solid #8a8a8a;
    background: linear-gradient(#43454a, #000);
}

.apps {
    display: flex;
    align-items: flex-end;
    gap: 2px;
    margin-bottom: -1px;
}

.apps a {
    height: 57px;
    padding: 0 33px;
    border: 2px solid #245489;
    border-bottom: none;
    border-radius: 20px 20px 0 0;
    background: linear-gradient(#a5cbe0, #5589bb 50%, #235590);
    color: #000;
    line-height: 56px;
    text-decoration: none;
}

.apps .current {
    border-color: #fff;
    background: linear-gradient(#dadada, #fff 60%);
}

.help-links {
    display: flex;
    gap: 57px;
    margin-left: auto;
    padding-top: 20px;
    font-size: 27px;
}

.help-links a {
    display: flex;
    gap: 9px;
    height: 40px;
}

.help-links span {
    text-decoration: underline;
}

.menu-row {
    display: flex;
    align-items: center;
    height: 80px;
    padding-bottom: 12px;
    background: linear-gradient(#fff, #ebebeb 33px, #fdfdfd 66px, #c9c9c9 67px, #c9c9c9 69px, #dfdfdf 70px, #f6f6f6 80px);
}

.menu-items {
    display: flex;
}

.menu-row a {
    color: #000;
    text-decoration: none;
    line-height: 38px;
}

.menu-items a {
    padding: 0 33px 0 34px;
    border-right: 2px solid #ccc;
}

.menu-items a:last-child {
    border-right: none;
}

.drop::after {
    content: "";
    display: inline-block;
    margin-left: 8px;
    border: 9px solid transparent;
    border-top: 11px solid #aaa;
    border-bottom: none;
}

.zoom {
    margin-left: auto;
    margin-right: 13px;
}

.pill {
    display: flex;
    align-items: center;
    height: 53px;
    border: 2px solid #ccc;
    border-radius: 27px;
    background: linear-gradient(#fff, #fafafa 60%, #e8e8e8);
}

.compose {
    gap: 13px;
    margin-right: 2px;
    padding: 0 28px 0 35px;
    color: #222;
    font-size: 25px;
}

/* ---- sidebar ---- */

.workspace-area {
    display: flex;
    flex: 1;
    gap: 25px;
    min-height: 0;
    padding: 25px 0 0 25px;
}

.sidebar {
    position: relative;
    display: flex;
    flex: none;
    flex-direction: column;
    width: 600px;
    margin-bottom: 25px;
    padding: 22px 42px 14px 25px;
    border: 3px solid #c9c9c9;
    border-radius: 28px 0 0 28px;
    background: #f5f5f5;
    font-size: 27px;
}

.search {
    margin-right: -26px;
    padding: 24px;
    height: 170px;
    border: 3px solid var(--rule);
    background: #d3d3d3;
}

.search-field {
    display: flex;
    align-items: center;
    height: 54px;
    padding-left: 7px;
    border: 3px solid var(--rule);
    background: #fff;
}

.search-field input {
    flex: 1;
    padding: 3px 0 0 7px;
    border: none;
    outline: none;
    font: italic 30px var(--web);
}

.search-field input::placeholder {
    color: #000;
}

.search-actions {
    display: flex;
    justify-content: space-between;
    margin-top: 12px;
    line-height: 46px;
}

.grey-btn {
    height: 50px;
    padding: 0 25px;
    border: 3px solid var(--rule);
    background: linear-gradient(#e8e8e8, #e4e4e4 48%, #c4c4c4 60%, #c4c4c4);
    font: bold 25px var(--heavy);
}

.search .grey-btn {
    width: 100px;
}

.switch {
    display: flex;
    height: 53px;
    margin-top: 27px;
    border-radius: 27px;
    overflow: hidden;
    font-size: 28px;
    font-weight: bold;
}

.switch button {
    flex: 1;
    border: 2px solid #ccc;
    border-left: none;
    border-radius: 0 27px 27px 0;
    background: linear-gradient(#fff, #ededed);
}

.switch .on {
    border: none;
    border-radius: 0;
    background: linear-gradient(#adadad, #cacaca 50%, #c4c4c4);
}

.storage {
    display: grid;
    grid-template-columns: 250px 1fr;
    justify-items: start;
    margin-top: 18px;
    line-height: 33px;
}

.storage a,
.storage .quota {
    justify-self: end;
}

.meter {
    position: relative;
    width: 100%;
    height: 32px;
    border: 2px solid #ccc;
    background: linear-gradient(#fff, #f2f2f2 60%, #fff);
}

.meter-fill {
    height: 28px;
    background: linear-gradient(#a7cdf3, #6aa7e6 60%, #9bcbf8);
    box-shadow: 0 0 0 2px #4080c4;
    clip-path: inset(-2px 0 -2px -2px);
}

.meter span {
    position: absolute;
    top: 0;
    left: 23px;
    line-height: 28px;
}

.new-folder {
    gap: 8px;
    margin-top: 17px;
    padding-left: 33px;
    color: var(--link);
    font-size: 28px;
    font-weight: bold;
}

.folders {
    display: flex;
    flex-direction: column;
    gap: 2px;
    margin-top: 30px;
    margin-left: -13px;
    font-size: 35px;
}

.folders a {
    display: flex;
    height: 60px;
    padding-left: 25px;
    color: #000;
    line-height: 54px;
    text-decoration: none;
}

.folders svg {
    width: 58px;
    height: 58px;
    margin: 2px 24px 0 0;
}

.folders .selected {
    background: #d3d3d3;
}

.folders em {
    margin: 2px 25px 0 auto;
    font-size: 30px;
    font-style: normal;
}

.folders.later {
    margin: 38px 0 0 12px;
    padding-top: 22px;
    border-top: 3px dotted #999;
}

.folders.later a {
    padding-left: 0;
}

.sidebar footer {
    margin-top: auto;
    white-space: nowrap;
}

.collapse {
    position: absolute;
    right: -3px;
    top: calc(50% - 54px);
    display: flex;
    align-items: center;
    justify-content: flex-end;
    width: 35px;
    height: 108px;
    border: 3px solid #ccc;
    border-right: none;
    border-radius: 15px 0 0 15px;
    background: #fff;
}

/* ---- message pane ---- */

.mail {
    flex: 1;
    min-width: 0;
    border-top: 3px solid var(--rule);
    border-left: 3px solid #aaa;
    border-radius: 28px 0 0 0;
}

.toolbar {
    display: flex;
    height: 143px;
    padding: 5px 9px 0 15px;
    border-bottom: 3px solid var(--rule);
    border-radius: 25px 0 0 0;
    background: linear-gradient(#fff, #f5f5f5 48%, #ececec 51%, #fff);
}

.tool {
    display: flex;
    flex-direction: column;
    align-items: center;
    width: 140px;
    padding: 0 20px;
    color: #222;
    font: 600 23px/23px var(--ui);
    white-space: nowrap;
}

.tool:nth-child(6) {
    white-space: normal;
}

.tool svg {
    width: 68px;
    height: 58px;
    margin-bottom: 7px;
}

.select {
    position: relative;
    width: 275px;
    height: 46px;
    border: 3px solid #7f9db9;
    background: #fff;
}

.select select {
    width: 100%;
    height: 100%;
    padding: 0 0 0 5px;
    border: none;
    background: none;
    appearance: none;
    color: #000;
    font: 28px/38px var(--ui);
}

.select svg {
    position: absolute;
    top: 1px;
    right: 1px;
    width: 40px;
    height: 38px;
    pointer-events: none;
}

.folder-select {
    margin: 37px 14px 0 0;
}

.actions-select {
    margin: 37px 14px 0 auto;
}

.dark-btn {
    height: 53px;
    margin-top: 32px;
    padding: 0 27px;
    border: 2px solid #000;
    border-radius: 6px;
    background: linear-gradient(#555, #606060 45%, #000 50%, #2a2a2a);
    color: #fff;
    font: bold 30px var(--heavy);
}

.mail-head {
    display: flex;
    margin-right: 3px;
    padding-bottom: 25px;
    background: #fcf6df;
}

.mail-info {
    flex: 0 0 2180px;
}

.crumbs {
    display: flex;
    align-items: center;
    height: 59px;
    padding-left: 9px;
}

.fold {
    align-self: flex-start;
    margin: 4px 12px 0 0;
}

.crumbs h1 {
    margin: 7px 0 0 10px;
    font-size: 30px;
}

.crumbs h1 a {
    color: #000;
}

.crumbs input {
    width: 28px;
    height: 28px;
    margin: 0 12px 8px 66px;
    border: 2px solid #aaa;
    border-radius: 6px;
    appearance: none;
    background: linear-gradient(#f2f2f2, #ddd);
}

.crumbs label {
    margin-top: 10px;
    font-size: 25px;
}

.fields {
    display: grid;
    grid-template-columns: 198px 1fr;
    column-gap: 26px;
}

.fields dt {
    font-weight: bold;
    text-align: right;
}

.subject-select {
    width: 899px;
}

.subject-select select {
    padding-left: 43px;
}

.from {
    display: flex;
    align-items: center;
    height: 34px;
}

.from small {
    margin-left: 26px;
    font-size: 25px;
}

.from svg {
    margin-left: 9px;
}

.mail-head > .grey-btn {
    width: 125px;
}

.pager {
    display: flex;
    align-items: flex-start;
    gap: 9px;
    margin-left: auto;
    padding: 2px 12px 0 0;
    height: 60px;
    border-right: 2px solid var(--rule);
}

.message {
    padding: 25px 25px 119px;
    border-bottom: 3px solid var(--rule);
}

.message pre {
    margin-top: 31px;
    font: 27px/34px "DejaVu Sans Mono", monospace;
}

.message pre span {
    font: 24px/34px "DejaVu Sans", sans-serif;
}

/* ---- taskbar ---- */

.taskbar {
    display: flex;
    flex: none;
    gap: 4px;
    height: 100px;
    background: #071217;
    color: #fff;
    font-family: var(--ui);
    font-size: 29px;
}

.start {
    width: 120px;
    display: flex;
    align-items: center;
    justify-content: center;
}

.grip {
    align-self: center;
    width: 9px;
    height: 76px;
    margin: 0 24px 0 11px;
    border: 2px solid #3a4346;
    border-top: none;
    border-bottom: none;
}

.task {
    display: flex;
    align-items: center;
    justify-content: center;
    width: 120px;
    padding-top: 2px;
    white-space: nowrap;
}

.task svg {
    width: 54px;
    height: 54px;
}

.task.wide {
    justify-content: flex-start;
    gap: 7px;
    width: 380px;
    margin: 0 9px;
    padding: 5px 0 0 18px;
    border-bottom: 5px solid #76b9ed;
}

.task.wide.active {
    width: 400px;
    margin: 0;
    padding-left: 28px;
    background: #3b4244;
}

.dw {
    font: bold 28px var(--ui);
}

.tray {
    display: flex;
    align-items: center;
    gap: 24px;
    margin-left: auto;
    padding: 2px 11px 0 0;
    font-size: 28px;
    line-height: 45px;
}

.lang,
.clock {
    display: flex;
    flex-direction: column;
    align-items: center;
}

.clock {
    margin-left: 8px;
}

.notify {
    position: relative;
    margin: 20px 4px 0 24px;
}

.notify span {
    position: absolute;
    left: 17px;
    top: 18px;
    width: 42px;
    height: 42px;
    border: 2px solid #888;
    border-radius: 50%;
    background: #2b2f31;
    font-weight: 600;
    line-height: 36px;
}

.show-desktop {
    width: 2px;
    height: 100%;
    background: #4c5558;
}
```
